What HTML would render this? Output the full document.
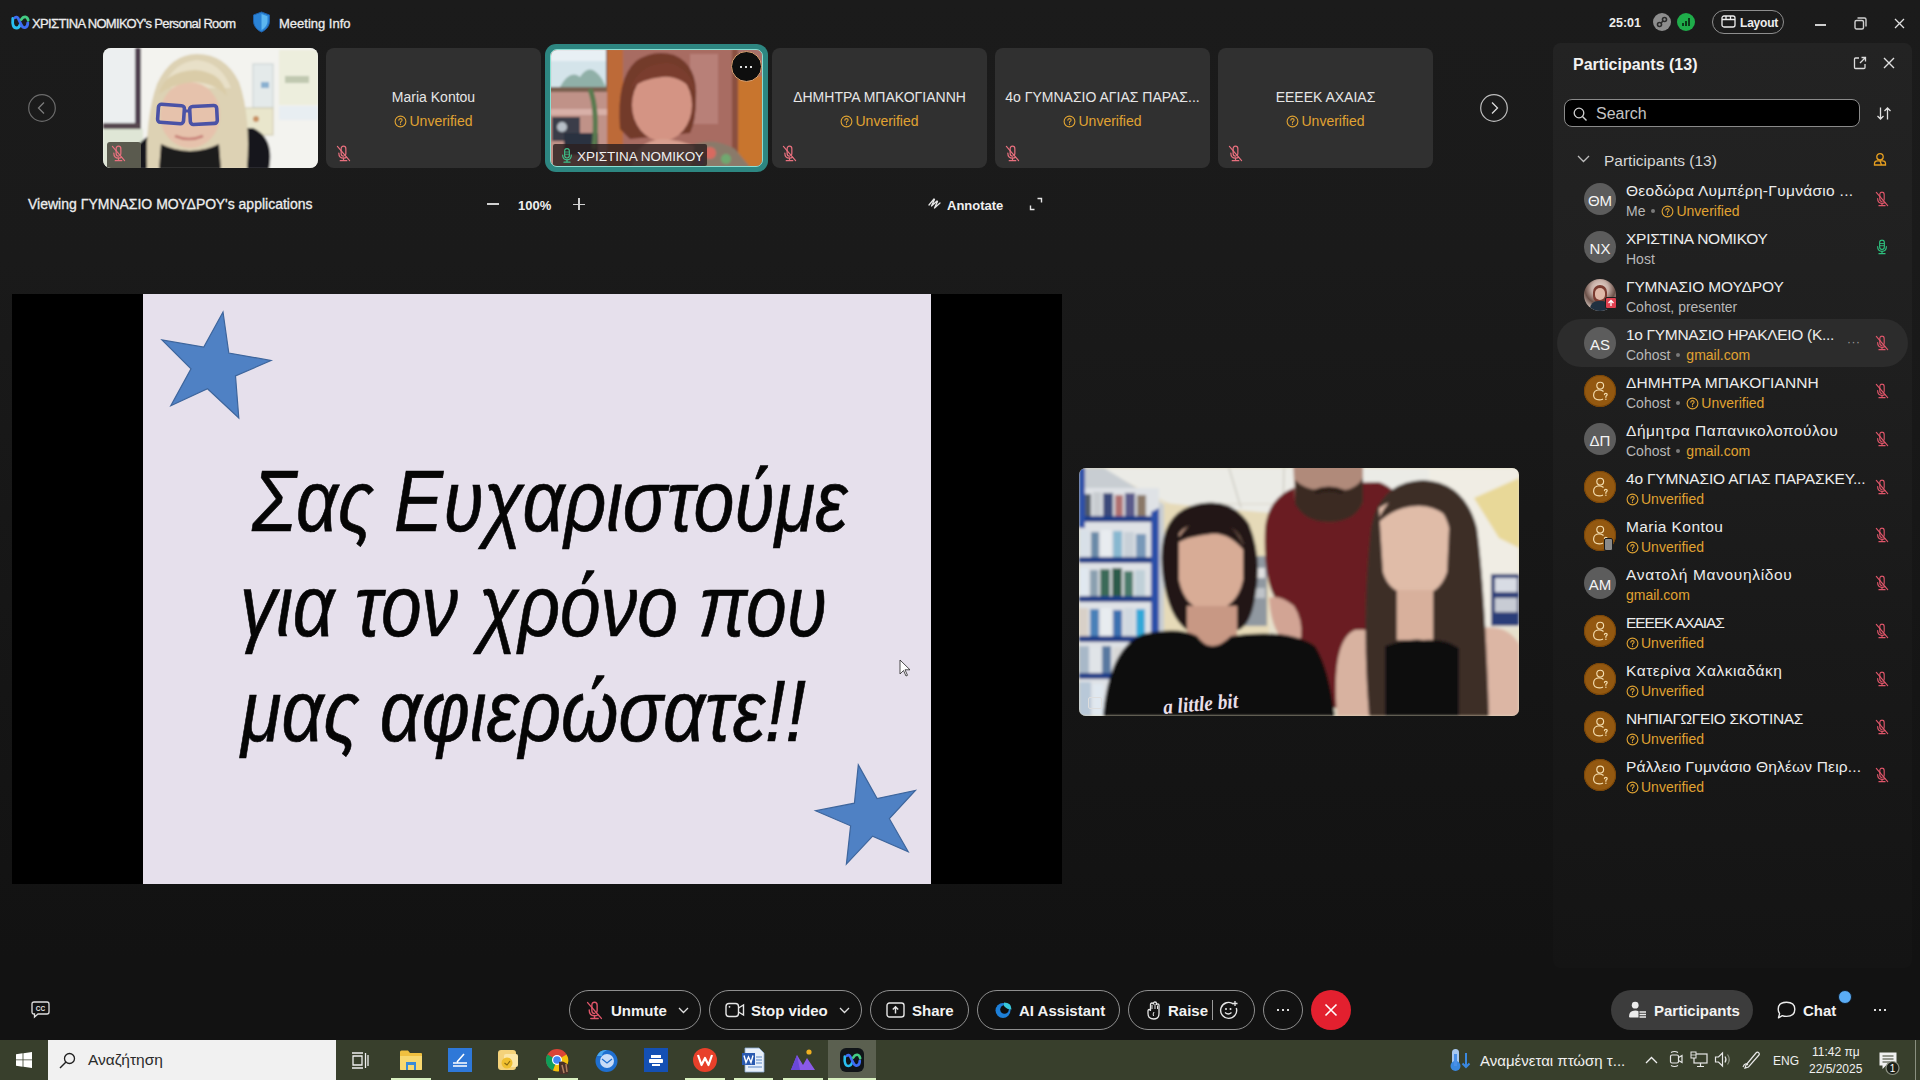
<!DOCTYPE html>
<html><head><meta charset="utf-8">
<style>
*{margin:0;padding:0;box-sizing:border-box}
html,body{width:1920px;height:1080px;overflow:hidden;font-family:"Liberation Sans",sans-serif;color:#e8e8e8}
body{position:relative;background:linear-gradient(#1b1b1b 0px,#1a1a1a 260px,#161616 600px,#121212 960px)}
.a{position:absolute}
.t{position:absolute;white-space:nowrap;line-height:1}
svg{position:absolute;overflow:visible}
#panel{left:1553px;top:43px;width:359px;height:925px;background:linear-gradient(#232323 0px,#1f1f1f 300px,#191919 600px,#141414 925px);border-radius:8px}
.thumb{position:absolute;top:48px;width:215px;height:120px;border-radius:8px;background:#303030;overflow:hidden}
.nm{position:absolute;left:0;width:215px;top:42px;text-align:center;font-size:14px;color:#e6e6e6;line-height:1}
.uv{position:absolute;left:0;width:215px;top:66px;text-align:center;font-size:14px;color:#e0a332;line-height:1}
#share{left:12px;top:294px;width:1050px;height:590px;background:#000}
#slide{left:143px;top:294px;width:788px;height:590px;background:#e6e0ec;overflow:hidden}
#task{left:0;top:1040px;width:1920px;height:40px;background:#383f2c}
.pill{position:absolute;top:990px;height:40px;border:1.5px solid #8e8e8e;border-radius:20px}
.bt{position:absolute;top:1003px;font-size:16px;color:#f2f2f2;line-height:1;white-space:nowrap}
</style></head><body>
<svg width="0" height="0" style="position:absolute">
<defs>
<symbol id="micoff" viewBox="0 0 16 18"><g fill="none" stroke="currentColor" stroke-width="1.3" stroke-linecap="round"><path d="M5.5 6 V4 Q5.5 1.2 8 1.2 Q10.5 1.2 10.5 4 V9 Q10.5 10.5 9.5 11.2"/><path d="M5.5 6 V9 Q5.5 11.8 8 11.8"/><path d="M3 8.5 Q3 14 8 14 Q10 14 11.3 13"/><path d="M8 14 V16.6 M4.5 16.6 H11.5"/><path d="M1.5 1.5 L14.5 16.5"/></g></symbol>
<symbol id="micon" viewBox="0 0 16 18"><g fill="none" stroke="currentColor" stroke-width="1.3" stroke-linecap="round"><rect x="5.3" y="1.2" width="5.4" height="10.6" rx="2.7"/><path d="M3 8.5 Q3 14 8 14 Q13 14 13 8.5"/><path d="M8 14 V16.6 M4.5 16.6 H11.5"/><path d="M6 5 H10 M6 7.5 H10" stroke-width="1"/></g></symbol>
<symbol id="q" viewBox="0 0 14 14"><circle cx="7" cy="7" r="5.8" fill="none" stroke="currentColor" stroke-width="1.2"/><path d="M5.2 5.6 Q5.2 3.9 7 3.9 Q8.8 3.9 8.8 5.5 Q8.8 6.5 7.6 7 Q7 7.3 7 8.2" fill="none" stroke="currentColor" stroke-width="1.1" stroke-linecap="round"/><circle cx="7" cy="10" r="0.75" fill="currentColor"/></symbol>
<symbol id="guest" viewBox="0 0 20 20"><g fill="none" stroke="#f5deb0" stroke-width="1.15" stroke-linecap="round"><circle cx="10.2" cy="4.6" r="3.4"/><path d="M13.2 10.2 Q11.6 8.8 9.3 8.8 Q3.6 9 3.6 14.3 Q3.6 18.8 9.3 18.8 Q11.3 18.8 12.6 18.2"/><path d="M14.4 13.6 Q14.4 12.3 15.8 12.3 Q17.2 12.3 17.2 13.6 Q17.2 14.6 15.9 15.2 V16.3"/></g><circle cx="15.9" cy="18.2" r="0.7" fill="#f5deb0"/></symbol>
</defs></svg>

<!-- ===== TITLE BAR ===== -->
<div id="titlebar">
  <svg style="left:10px;top:13px" width="20" height="20" viewBox="2 3 20 20"><g fill="none" stroke-width="2.8" stroke-linecap="round"><path d="M4.8 8.5 Q3.8 18 8.6 18 Q11.2 18 12.4 14" stroke="#28bff0"/><path d="M6.8 7.8 Q8.6 6.2 10.2 8.4 L13.2 14.6 Q14.8 18 17 17.6 Q19.8 17 19.8 12.8" stroke="#3d6cf2"/><path d="M13.2 9.6 Q15 6.6 17.4 6.8 Q19.4 7 20.2 10.2" stroke="#44cc84"/></g></svg>
  <div class="t" style="left:32px;top:17px;font-size:13px;letter-spacing:-0.65px;color:#ececec;-webkit-text-stroke:0.3px #ececec">ΧΡΙΣΤΙΝΑ ΝΟΜΙΚΟΥ's Personal Room</div>
  <svg style="left:252px;top:11px" width="19" height="22" viewBox="0 0 19 22">
    <path d="M9.5 1 L17.5 4 V10 C17.5 15 14 19 9.5 21 C5 19 1.5 15 1.5 10 V4Z" fill="#2a83d6" stroke="#1e5fa8" stroke-width="1"/>
    <path d="M9.5 3 L15.5 5.3 V10 C15.5 14 13 17 9.5 19Z" fill="#5cb6f0"/>
  </svg>
  <div class="t" style="left:279px;top:17px;font-size:13px;color:#ececec;-webkit-text-stroke:0.3px #ececec">Meeting Info</div>

  <div class="t" style="left:1609px;top:17px;font-size:12.5px;font-weight:bold;color:#ededed">25:01</div>
  <div class="a" style="left:1653px;top:13px;width:18px;height:18px;border-radius:9px;background:#8d8d8d"></div>
  <svg style="left:1656px;top:16px" width="12" height="12" viewBox="0 0 12 12"><circle cx="8.5" cy="3.5" r="2" fill="none" stroke="#2a2a2a" stroke-width="1.6"/><circle cx="3.5" cy="8.5" r="2" fill="none" stroke="#2a2a2a" stroke-width="1.6"/><path d="M7 5 L5 7" stroke="#2a2a2a" stroke-width="1.6"/></svg>
  <div class="a" style="left:1677px;top:13px;width:18px;height:18px;border-radius:9px;background:#1fad4a"></div>
  <svg style="left:1681px;top:16px" width="10" height="11" viewBox="0 0 10 11"><rect x="1" y="7" width="2" height="3" fill="#0b3a18"/><rect x="4" y="5" width="2" height="5" fill="#0b3a18"/><rect x="7" y="2" width="2" height="8" fill="#0b3a18"/></svg>
  <div class="a" style="left:1712px;top:10px;width:72px;height:24px;border:1.5px solid #8e8e8e;border-radius:12px"></div>
  <svg style="left:1721px;top:15px" width="15" height="13" viewBox="0 0 15 13"><rect x="1" y="1" width="13" height="11" rx="2" fill="none" stroke="#eee" stroke-width="1.3"/><path d="M1 4.5 H14 M5 1 V4.5 M9.5 1 V4.5" stroke="#eee" stroke-width="1.3"/></svg>
  <div class="t" style="left:1740px;top:17px;font-size:12px;letter-spacing:-0.2px;font-weight:bold;color:#ededed">Layout</div>
  <div class="a" style="left:1815px;top:24px;width:11px;height:2px;background:#cfcfcf"></div>
  <svg style="left:1854px;top:17px" width="13" height="13" viewBox="0 0 13 13"><rect x="1" y="3.5" width="8.5" height="8.5" rx="1.5" fill="none" stroke="#cfcfcf" stroke-width="1.4"/><path d="M3.5 1 H10.5 Q12 1 12 2.5 V9.5" fill="none" stroke="#cfcfcf" stroke-width="1.4"/></svg>
  <svg style="left:1894px;top:18px" width="11" height="11" viewBox="0 0 11 11"><path d="M1 1 L10 10 M10 1 L1 10" stroke="#e0e0e0" stroke-width="1.3"/></svg>
</div>

<!-- ===== THUMB STRIP ===== -->
<div id="strip">
  <svg style="left:28px;top:94px" width="28" height="28" viewBox="0 0 28 28"><circle cx="14" cy="14" r="13.3" fill="none" stroke="#6b6b6b" stroke-width="1.2"/><path d="M16 8.5 L10.5 14 L16 19.5" fill="none" stroke="#7c7c7c" stroke-width="1.3"/></svg>
  <svg style="left:1480px;top:94px" width="28" height="28" viewBox="0 0 28 28"><circle cx="14" cy="14" r="13.3" fill="none" stroke="#bdbdbd" stroke-width="1.2"/><path d="M12 8.5 L17.5 14 L12 19.5" fill="none" stroke="#dcdcdc" stroke-width="1.3"/></svg>

  <!-- T1 photo -->
  <div class="thumb" style="left:103px;background:#f2f2ee">
    <svg style="left:0;top:0" width="215" height="120" viewBox="0 0 215 120">
      <defs><filter id="bl1" x="-10%" y="-10%" width="120%" height="120%"><feGaussianBlur stdDeviation="1.2"/></filter></defs>
      <g filter="url(#bl1)">
      <rect x="0" y="0" width="215" height="120" fill="#f3f3ef"/>
      <rect x="0" y="0" width="34" height="77" fill="#eceff0"/>
      <rect x="32" y="0" width="6" height="80" fill="#4f3f4f"/>
      <rect x="0" y="75" width="38" height="6" fill="#56464f"/>
      <rect x="0" y="81" width="40" height="40" fill="#dfe6d6"/>
      <rect x="150" y="16" width="20" height="44" fill="#e4eaea" stroke="#c8cfcf" stroke-width="1"/>
      <rect x="158" y="34" width="8" height="6" fill="#8ab0d0"/>
      <rect x="176" y="2" width="39" height="55" fill="#edeedd"/>
      <rect x="182" y="28" width="24" height="7" fill="#c0c8b0"/>
      <rect x="176" y="58" width="39" height="14" fill="#e8eef2"/>
      <rect x="137" y="60" width="33" height="27" fill="#e9e6cc" stroke="#cfc9b0" stroke-width="1"/>
      <circle cx="153" cy="71" r="3" fill="#c89060"/>
      <path d="M24 121 Q28 92 62 80 L150 80 Q172 90 166 121Z" fill="#18181e"/>
      <path d="M44 121 Q42 70 54 36 Q68 6 94 6 Q122 6 136 34 Q148 68 144 121Z" fill="#ddd2b4"/>
      <path d="M60 40 Q70 14 94 12 Q118 14 128 40Z" fill="#e8e0c8"/>
      <ellipse cx="87" cy="67" rx="30" ry="33" fill="#e6c2ac"/>
      <path d="M56 46 Q60 24 92 22 Q120 24 124 48 Q110 34 90 34 Q70 36 56 46Z" fill="#dacca8"/>
      <path d="M58 96 Q87 110 116 96 L118 121 H56Z" fill="#1e1a1e"/>
      <path d="M72 88 Q86 94 100 88" fill="none" stroke="#c88078" stroke-width="2.5"/>
      </g>
      <rect x="55" y="57" width="26" height="18" rx="3" fill="none" stroke="#4a52a6" stroke-width="3.6" transform="rotate(4 68 66)"/>
      <rect x="87" y="58" width="27" height="18" rx="3" fill="none" stroke="#4a52a6" stroke-width="3.6" transform="rotate(-3 100 67)"/>
      <path d="M80 63 H88" stroke="#4a52a6" stroke-width="3"/>
      <rect x="4" y="94" width="34" height="28" rx="3" fill="#5a5a4e"/>
    </svg>
    <svg style="left:8px;top:97px;color:#e8707e" width="15" height="17"><use href="#micoff"/></svg>
  </div>

  <div class="thumb" style="left:326px">
    <div class="nm">Maria Kontou</div>
    <div class="uv"><svg style="position:relative;display:inline-block;vertical-align:-2px;width:13px;height:13px;margin-right:2px;color:#e0a332" viewBox="0 0 14 14"><use href="#q"/></svg>Unverified</div>
    <svg style="left:10px;top:97px;color:#e8707e" width="15" height="17"><use href="#micoff"/></svg>
  </div>

  <!-- T3 active -->
  <div class="a" style="left:545px;top:44px;width:223px;height:128px;border-radius:11px;background:#2d8681"></div>
  <div class="thumb" style="left:550px;top:49px;width:213px;height:118px;border-radius:7px;background:#b27a6c;border:1px solid #8ae0d4">
    <svg style="left:-1px;top:-1px" width="213" height="118" viewBox="0 0 213 118">
      <defs><filter id="bl3" x="-10%" y="-10%" width="120%" height="120%"><feGaussianBlur stdDeviation="1.3"/></filter></defs>
      <g filter="url(#bl3)">
      <rect x="0" y="0" width="213" height="118" fill="#a8706a"/>
      <rect x="0" y="0" width="62" height="40" fill="#d4e4ea"/>
      <path d="M10 38 Q20 20 30 28 Q40 12 52 30 L56 38Z" fill="#90b0a8"/>
      <rect x="0" y="0" width="62" height="12" fill="#e8f0f4"/>
      <rect x="56" y="0" width="8" height="42" fill="#5a4a3a"/>
      <rect x="0" y="38" width="64" height="5" fill="#7a6050"/>
      <rect x="0" y="43" width="70" height="75" fill="#c09288"/>
      <rect x="0" y="60" width="60" height="6" fill="#d8b0a8"/>
      <rect x="2" y="68" width="28" height="24" fill="#3a3e48"/>
      <circle cx="12" cy="78" r="5" fill="#b8c0c8"/>
      <rect x="14" y="84" width="34" height="22" fill="#2a3040"/>
      <path d="M40 40 Q48 60 44 100" stroke="#5a7a50" stroke-width="5" fill="none"/>
      <rect x="57" y="0" width="16" height="118" fill="#bd6a38"/>
      <rect x="73" y="0" width="112" height="118" fill="#a86c62"/>
      <rect x="140" y="5" width="28" height="70" fill="#b88078"/>
      <rect x="184" y="27" width="29" height="91" fill="#c8742e"/>
      <rect x="182" y="0" width="6" height="118" fill="#8a5040"/>
      <path d="M70 80 Q66 30 86 12 Q104 0 124 6 Q148 16 146 50 Q146 72 140 84 L80 90Z" fill="#733a2c"/>
      <ellipse cx="112" cy="56" rx="30" ry="36" fill="#d49484"/>
      <path d="M80 40 Q90 14 118 14 Q140 18 146 44 Q130 26 112 28 Q92 30 80 40Z" fill="#7a3e2e"/>
      <path d="M82 118 Q86 92 112 90 Q130 90 150 100 L160 118Z" fill="#d8a090"/>
      <path d="M145 95 Q165 88 185 100 L200 118 H140Z" fill="#8a7a6a"/>
      <circle cx="160" cy="104" r="6" fill="#d86a60"/>
      <circle cx="176" cy="110" r="5" fill="#70a870"/>
      <circle cx="150" cy="112" r="4" fill="#8060a0"/>
      </g>
      <rect x="3" y="95" width="154" height="22" rx="2" fill="rgba(44,32,32,0.82)"/>
    </svg>
    <svg style="left:9px;top:97px;color:#3fc08a" width="14" height="17"><use href="#micon"/></svg>
    <div class="t" style="left:26px;top:100px;font-size:13.5px;color:#f0f0f0">ΧΡΙΣΤΙΝΑ ΝΟΜΙΚΟΥ</div>
    <div class="a" style="left:180px;top:1px;width:31px;height:31px;border-radius:16px;background:#0e0e0e;border:1px solid #d9a070"></div>
    <div class="a" style="left:189px;top:16px;width:2px;height:2px;background:#ddd"></div>
    <div class="a" style="left:194px;top:16px;width:2px;height:2px;background:#ddd"></div>
    <div class="a" style="left:199px;top:16px;width:2px;height:2px;background:#ddd"></div>
  </div>

  <div class="thumb" style="left:772px">
    <div class="nm">ΔΗΜΗΤΡΑ ΜΠΑΚΟΓΙΑΝΝΗ</div>
    <div class="uv"><svg style="position:relative;display:inline-block;vertical-align:-2px;width:13px;height:13px;margin-right:2px;color:#e0a332" viewBox="0 0 14 14"><use href="#q"/></svg>Unverified</div>
    <svg style="left:10px;top:97px;color:#e8707e" width="15" height="17"><use href="#micoff"/></svg>
  </div>
  <div class="thumb" style="left:995px">
    <div class="nm">4ο ΓΥΜΝΑΣΙΟ ΑΓΙΑΣ ΠΑΡΑΣ...</div>
    <div class="uv"><svg style="position:relative;display:inline-block;vertical-align:-2px;width:13px;height:13px;margin-right:2px;color:#e0a332" viewBox="0 0 14 14"><use href="#q"/></svg>Unverified</div>
    <svg style="left:10px;top:97px;color:#e8707e" width="15" height="17"><use href="#micoff"/></svg>
  </div>
  <div class="thumb" style="left:1218px">
    <div class="nm">ΕΕΕΕΚ ΑΧΑΙΑΣ</div>
    <div class="uv"><svg style="position:relative;display:inline-block;vertical-align:-2px;width:13px;height:13px;margin-right:2px;color:#e0a332" viewBox="0 0 14 14"><use href="#q"/></svg>Unverified</div>
    <svg style="left:10px;top:97px;color:#e8707e" width="15" height="17"><use href="#micoff"/></svg>
  </div>
</div>

<!-- ===== VIEW BAR ===== -->
<div id="viewbar">
  <div class="t" style="left:28px;top:197px;font-size:14px;color:#ededed;-webkit-text-stroke:0.3px #ededed">Viewing ΓΥΜΝΑΣΙΟ ΜΟΥΔΡΟΥ's applications</div>
  <div class="a" style="left:487px;top:203px;width:12px;height:1.6px;background:#d0d0d0"></div>
  <div class="t" style="left:518px;top:199px;font-size:13px;font-weight:bold;color:#f0f0f0">100%</div>
  <div class="a" style="left:573px;top:203.5px;width:12px;height:1.6px;background:#d0d0d0"></div>
  <div class="a" style="left:578.2px;top:198px;width:1.6px;height:12px;background:#d0d0d0"></div>
  <svg style="left:928px;top:197px" width="14" height="13" viewBox="0 0 14 13"><path d="M1 8 L6 2 L6.5 2.5 L3.5 9 L9 4 L9.5 4.5 L6.5 11 L12 6" fill="none" stroke="#e6e6e6" stroke-width="1.3" stroke-linejoin="round" stroke-linecap="round"/></svg>
  <div class="t" style="left:947px;top:199px;font-size:13px;font-weight:bold;color:#f0f0f0">Annotate</div>
  <svg style="left:1029px;top:197px" width="14" height="14" viewBox="0 0 14 14"><path d="M8.5 1.5 H12.5 V5.5 M5.5 12.5 H1.5 V8.5" fill="none" stroke="#e6e6e6" stroke-width="1.4"/></svg>
</div>

<!-- ===== SHARE ===== -->
<div id="share" class="a"></div>
<div id="slide" class="a">
  <svg style="left:0;top:0" width="788" height="590" viewBox="143 294 788 590">
    <polygon points="223,312 228.8,353 271,360.5 235.5,376 238.8,418 207.5,388.8 170.8,405.8 191,368.8 162,340 203.8,347" fill="#4f81c4" stroke="#3d659c" stroke-width="1.2" stroke-linejoin="miter"/>
    <polygon points="858.3,764.9 877.1,798.6 915.4,790.4 889.4,818.7 908.2,851.8 872.6,836.2 846.4,864.1 850.6,825.8 815.6,810.7 854.4,803.2" fill="#4f81c4" stroke="#3d659c" stroke-width="1.2"/>
    <path d="M900 660 V674 L903.5 670.5 L906 676 L907.5 675.3 L905 669.8 H910Z" fill="#fff" stroke="#222" stroke-width="0.8"/>
  </svg>
  <div class="t" style="left:109px;top:163px;font-size:88px;font-style:italic;color:#050505;-webkit-text-stroke:0.7px #050505;transform:scaleX(0.835);transform-origin:0 0">Σας Ευχαριστούμε</div>
  <div class="t" style="left:97px;top:268px;font-size:88px;font-style:italic;color:#050505;-webkit-text-stroke:0.7px #050505;transform:scaleX(0.83);transform-origin:0 0">για τον χρόνο που</div>
  <div class="t" style="left:98px;top:373px;font-size:88px;font-style:italic;color:#050505;-webkit-text-stroke:0.7px #050505;transform:scaleX(0.838);transform-origin:0 0">μας αφιερώσατε!!</div>
</div>

<!-- ===== VIDEO ===== -->
<div id="video" class="a" style="left:1079px;top:468px;width:440px;height:248px;border-radius:7px;overflow:hidden;background:#e4dcc0">
  <svg style="left:0;top:0" width="440" height="248" viewBox="0 0 440 248">
    <defs><filter id="blv" x="-5%" y="-5%" width="110%" height="110%"><feGaussianBlur stdDeviation="1.4"/></filter></defs>
    <g filter="url(#blv)">
    <rect x="0" y="0" width="440" height="248" fill="#e6e0cc"/>
    <!-- ceiling -->
    <path d="M20 0 H440 V30 Q400 40 330 45 H200 L100 40Z" fill="#ebebe6"/>
    <path d="M150 0 L162 40 M205 0 L204 42" stroke="#c8c6bc" stroke-width="1.2"/>
    <path d="M115 36 H440" stroke="#d8d4c8" stroke-width="1"/>
    <!-- left wall -->
    <path d="M0 0 H25 L90 40 V248 H0Z" fill="#c8cdd2"/>
    <path d="M85 35 L190 45 V200 H85Z" fill="#e6dab8"/>
    <!-- bookshelf left -->
    <rect x="0" y="20" width="80" height="228" fill="#dfe2e6"/>
    <g>
      <rect x="2" y="26" width="10" height="22" fill="#505a68"/><rect x="14" y="24" width="8" height="24" fill="#c8ccd0"/><rect x="24" y="25" width="10" height="23" fill="#3a4a7a"/><rect x="36" y="27" width="8" height="21" fill="#b07070"/><rect x="46" y="25" width="10" height="23" fill="#5a5a8a"/><rect x="58" y="27" width="9" height="21" fill="#8a7868"/>
      <rect x="0" y="62" width="10" height="27" fill="#d8e0e8"/><rect x="12" y="64" width="8" height="25" fill="#6a8aa8"/><rect x="22" y="62" width="10" height="27" fill="#e8ecf0"/><rect x="34" y="63" width="9" height="26" fill="#88b8d0"/><rect x="45" y="64" width="10" height="25" fill="#c8d0d8"/><rect x="57" y="66" width="10" height="23" fill="#7898b8"/>
      <rect x="0" y="100" width="9" height="28" fill="#e0e8f0"/><rect x="11" y="102" width="8" height="26" fill="#8aa0b0"/><rect x="21" y="101" width="10" height="27" fill="#3a6a58"/><rect x="33" y="100" width="10" height="28" fill="#2a5a48"/><rect x="45" y="103" width="9" height="25" fill="#4a7a6a"/><rect x="56" y="102" width="10" height="26" fill="#c0d0d8"/>
      <rect x="0" y="140" width="9" height="28" fill="#d8d0c8"/><rect x="11" y="141" width="9" height="27" fill="#4a80b8"/><rect x="22" y="140" width="10" height="28" fill="#e8ecf0"/><rect x="34" y="142" width="9" height="26" fill="#3a70b0"/><rect x="45" y="140" width="10" height="28" fill="#d0d8e0"/><rect x="57" y="141" width="9" height="27" fill="#30a8d8"/>
      <rect x="0" y="178" width="10" height="27" fill="#a8b8c8"/><rect x="12" y="180" width="9" height="25" fill="#e0e4e8"/><rect x="23" y="178" width="9" height="27" fill="#5878a0"/><rect x="34" y="179" width="10" height="26" fill="#d8d8d8"/><rect x="46" y="180" width="8" height="25" fill="#b0a8a0"/>
      <rect x="0" y="214" width="12" height="34" fill="#b8c8d8"/><rect x="14" y="216" width="10" height="32" fill="#e0e8f0"/>
    </g>
    <rect x="0" y="48" width="78" height="6" fill="#1e3c88"/>
    <rect x="0" y="89" width="78" height="6" fill="#1e3c88"/>
    <rect x="0" y="128" width="78" height="6" fill="#1e3c88"/>
    <rect x="0" y="168" width="72" height="6" fill="#1e3c88"/>
    <rect x="0" y="205" width="62" height="6" fill="#1e3c88"/>
    <path d="M72 44 L80 40 V200 L72 204Z" fill="#2a50a8"/>
    <rect x="0" y="0" width="6" height="60" fill="#2a50a8"/>
    <!-- back shelf center -->
    <rect x="160" y="88" width="28" height="70" fill="#9098a0"/>
    <rect x="162" y="100" width="24" height="10" fill="#e0e0e0"/>
    <rect x="162" y="120" width="24" height="10" fill="#c0c4c8"/>
    <!-- right background -->
    <path d="M350 0 H440 V160 H350Z" fill="#f0ede4"/>
    <path d="M395 30 L440 10 V80 L420 70Z" fill="#e8d898"/>
    <rect x="412" y="106" width="28" height="52" fill="#2c3e78"/>
    <rect x="416" y="110" width="22" height="14" fill="#d8dce4"/>
    <rect x="416" y="130" width="22" height="14" fill="#c8ccd4"/>
    <!-- man -->
    <path d="M186 60 Q190 22 230 16 L300 14 Q330 24 332 80 L320 240 H226 L215 180 Q200 140 196 130 Q184 110 186 60Z" fill="#6a1c24"/>
    <path d="M214 -6 H284 V34 Q274 52 250 54 Q226 52 216 34Z" fill="#b08a7a"/>
    <path d="M216 12 Q224 20 238 22 Q252 18 266 22 Q278 20 284 10 V34 Q276 54 250 54 Q226 54 216 36Z" fill="#3a2a22"/>
    <path d="M236 24 Q250 18 264 24" stroke="#2a1c16" stroke-width="5" fill="none"/>
    <path d="M190 130 Q200 126 215 138 Q224 152 222 170 L204 172 Q192 160 190 130Z" fill="#d2a494"/>
    <!-- girl 2 -->
    <path d="M258 248 Q252 172 276 162 Q300 160 306 172 L308 248Z" fill="#d8b2a0"/>
    <path d="M402 160 Q428 156 440 176 V248 H404Z" fill="#dcb6a4"/>
    <path d="M290 248 Q282 150 292 60 Q300 14 344 12 Q386 14 398 60 Q406 120 410 248Z" fill="#3e2e28"/>
    <path d="M300 40 Q312 30 340 32 Q364 34 370 60 L368 104 Q360 128 336 128 Q310 126 304 104Z" fill="#e0bca8"/>
    <path d="M298 56 Q310 20 344 22 Q372 24 376 56 Q360 38 340 38 Q316 38 298 56Z" fill="#3e2e28"/>
    <rect x="318" y="122" width="36" height="50" fill="#d8b09c"/>
    <path d="M306 248 V178 Q330 170 344 172 Q366 170 380 180 V248Z" fill="#0e0e10"/>
    <!-- girl 1 -->
    <path d="M84 110 Q76 50 112 38 Q150 26 170 56 Q184 90 176 130 Q172 156 160 162 L108 162 Q90 150 84 110Z" fill="#221614"/>
    <path d="M100 66 Q108 54 132 54 Q158 56 164 76 L164 112 Q158 140 132 144 Q106 142 100 112Z" fill="#d8ac96"/>
    <path d="M96 76 Q110 48 134 52 Q160 56 166 84 Q150 64 132 66 Q110 68 96 76Z" fill="#221614"/>
    <rect x="108" y="138" width="50" height="40" fill="#c89884"/>
    <path d="M24 248 Q30 180 64 166 Q100 158 118 168 Q132 188 152 168 Q210 160 236 178 Q250 200 256 248Z" fill="#0b0b0d"/>
    </g>
  </svg>
  <div class="t" style="left:85px;top:229px;font-size:21px;font-weight:bold;font-style:italic;color:#e8dee8;font-family:'Liberation Serif',serif;transform:rotate(-5deg) scaleX(0.92);transform-origin:0 100%">a little bit</div>
  <div class="a" style="left:9px;top:229px;width:14px;height:12px;border:1.2px solid #ddd;border-radius:2px"></div>
</div>

<!-- ===== PANEL ===== -->
<div id="panel" class="a"></div>
<div id="plist">
  <div class="t" style="left:1573px;top:57px;font-size:16px;font-weight:bold;color:#f2f2f2">Participants (13)</div>
  <svg style="left:1853px;top:56px" width="14" height="14" viewBox="0 0 14 14"><path d="M6 2 H2.5 Q1.5 2 1.5 3 V11.5 Q1.5 12.5 2.5 12.5 H11 Q12 12.5 12 11.5 V8" fill="none" stroke="#dcdcdc" stroke-width="1.3"/><path d="M8.5 1.5 H12.5 V5.5 M12.5 1.5 L7 7" fill="none" stroke="#dcdcdc" stroke-width="1.3"/></svg>
  <svg style="left:1883px;top:57px" width="12" height="12" viewBox="0 0 12 12"><path d="M1 1 L11 11 M11 1 L1 11" stroke="#e0e0e0" stroke-width="1.4"/></svg>
  <div class="a" style="left:1564px;top:99px;width:296px;height:28px;background:#000;border:1.5px solid #8a8a8a;border-radius:8px"></div>
  <svg style="left:1573px;top:107px" width="15" height="15" viewBox="0 0 15 15"><circle cx="6" cy="6" r="4.8" fill="none" stroke="#d0d0d0" stroke-width="1.3"/><path d="M9.5 9.5 L13.5 13.5" stroke="#d0d0d0" stroke-width="1.4"/></svg>
  <div class="t" style="left:1596px;top:106px;font-size:16px;color:#c4c4c4">Search</div>
  <svg style="left:1876px;top:106px" width="16" height="15" viewBox="0 0 16 15"><path d="M4.5 1.5 V13 M1.5 10 L4.5 13 L7.5 10 M11.5 13.5 V2 M8.5 5 L11.5 2 L14.5 5" fill="none" stroke="#e0e0e0" stroke-width="1.3"/></svg>
  <svg style="left:1577px;top:155px" width="13" height="8" viewBox="0 0 13 8"><path d="M1 1 L6.5 6.5 L12 1" fill="none" stroke="#bdbdbd" stroke-width="1.3"/></svg>
  <div class="t" style="left:1604px;top:153px;font-size:15.5px;color:#d6d6d6">Participants (13)</div>
  <svg style="left:1873px;top:152px" width="14" height="14" viewBox="0 0 14 14"><g fill="none" stroke="#e8a020" stroke-width="1.3"><circle cx="7" cy="4.8" r="3.2"/><path d="M1.5 13 V11.5 Q1.5 8.8 4.5 8.8 H9.5 Q12.5 8.8 12.5 11.5 V13 Z"/><path d="M7 8.8 L8.5 13"/></g></svg>
  <div class="a" style="left:1557px;top:319px;width:351px;height:48px;border-radius:24px;background:#2c2c2c"></div>
  <div class="t" style="left:1847px;top:336px;font-size:12px;color:#9a9a9a;letter-spacing:0.5px">···</div>
  <div class="a" style="left:1584px;top:183px;width:32px;height:32px;border-radius:16px;background:#5c5c5c"></div>
  <div class="t" style="left:1584px;top:193px;width:32px;text-align:center;font-size:15px;color:#f4f4f4">ΘΜ</div>
  <div class="t" style="left:1626px;top:183px;font-size:15.5px;letter-spacing:0.3px;color:#ececec">Θεοδώρα Λυμπέρη-Γυμνάσιο ...</div>
  <div class="t" style="left:1626px;top:204px;font-size:14px"><span style="color:#b8b8b8">Me</span><span style="display:inline-block;width:4px;height:4px;border-radius:2px;background:#7a7a7a;margin:0 6px;vertical-align:3px"></span><svg style="position:relative;display:inline-block;vertical-align:-2px;width:13px;height:13px;margin-right:2px;color:#e0a332" viewBox="0 0 14 14"><use href="#q"/></svg><span style="color:#e0a332">Unverified</span></div>
  <svg style="left:1875px;top:191px;color:#e0566a" width="14" height="16" viewBox="0 0 16 18"><use href="#micoff"/></svg>
  <div class="a" style="left:1584px;top:231px;width:32px;height:32px;border-radius:16px;background:#5c5c5c"></div>
  <div class="t" style="left:1584px;top:241px;width:32px;text-align:center;font-size:15px;color:#f4f4f4">ΝΧ</div>
  <div class="t" style="left:1626px;top:231px;font-size:15.5px;letter-spacing:-0.24px;color:#ececec">ΧΡΙΣΤΙΝΑ ΝΟΜΙΚΟΥ</div>
  <div class="t" style="left:1626px;top:252px;font-size:14px"><span style="color:#b8b8b8">Host</span></div>
  <svg style="left:1875px;top:239px;color:#2ec07e" width="14" height="16" viewBox="0 0 16 18"><use href="#micon"/></svg>
  <div class="a" style="left:1584px;top:279px;width:32px;height:32px;border-radius:16px;overflow:hidden;background:radial-gradient(circle at 50% 30%,#e8d8d0 0,#c8b0a8 30%,#6a5048 55%,#d8c8c0 80%)"><div class="a" style="left:9px;top:6px;width:14px;height:18px;border-radius:7px;background:#7a3a30"></div><div class="a" style="left:11px;top:9px;width:10px;height:12px;border-radius:5px;background:#e0b8a8"></div><div class="a" style="left:6px;top:22px;width:20px;height:12px;border-radius:8px 8px 0 0;background:#203040"></div></div>
  <div class="a" style="left:1605px;top:297px;width:12px;height:12px;border-radius:2px;background:#e04050;border:1px solid #1e1e1e"></div>
  <svg style="left:1607px;top:299px" width="8" height="8" viewBox="0 0 8 8"><path d="M4 7 V1.5 M1.5 4 L4 1.5 L6.5 4" fill="none" stroke="#fff" stroke-width="1.3"/></svg>
  <div class="t" style="left:1626px;top:279px;font-size:15.5px;letter-spacing:-0.14px;color:#ececec">ΓΥΜΝΑΣΙΟ ΜΟΥΔΡΟΥ</div>
  <div class="t" style="left:1626px;top:300px;font-size:14px"><span style="color:#b8b8b8">Cohost, presenter</span></div>
  <div class="a" style="left:1584px;top:327px;width:32px;height:32px;border-radius:16px;background:#5c5c5c"></div>
  <div class="t" style="left:1584px;top:337px;width:32px;text-align:center;font-size:15px;color:#f4f4f4">AS</div>
  <div class="t" style="left:1626px;top:327px;font-size:15.5px;letter-spacing:-0.31px;color:#ececec">1ο ΓΥΜΝΑΣΙΟ ΗΡΑΚΛΕΙΟ (Κ...</div>
  <div class="t" style="left:1626px;top:348px;font-size:14px"><span style="color:#b8b8b8">Cohost</span><span style="display:inline-block;width:4px;height:4px;border-radius:2px;background:#7a7a7a;margin:0 6px;vertical-align:3px"></span><span style="color:#e0a332">gmail.com</span></div>
  <svg style="left:1875px;top:335px;color:#e0566a" width="14" height="16" viewBox="0 0 16 18"><use href="#micoff"/></svg>
  <div class="a" style="left:1584px;top:375px;width:32px;height:32px;border-radius:16px;background:#935810;box-shadow:inset 0 0 0 1px #7a4608"></div>
  <svg style="left:1590px;top:381px" width="20" height="20" viewBox="0 0 20 20"><use href="#guest"/></svg>
  <div class="t" style="left:1626px;top:375px;font-size:15.5px;letter-spacing:0.08px;color:#ececec">ΔΗΜΗΤΡΑ ΜΠΑΚΟΓΙΑΝΝΗ</div>
  <div class="t" style="left:1626px;top:396px;font-size:14px"><span style="color:#b8b8b8">Cohost</span><span style="display:inline-block;width:4px;height:4px;border-radius:2px;background:#7a7a7a;margin:0 6px;vertical-align:3px"></span><svg style="position:relative;display:inline-block;vertical-align:-2px;width:13px;height:13px;margin-right:2px;color:#e0a332" viewBox="0 0 14 14"><use href="#q"/></svg><span style="color:#e0a332">Unverified</span></div>
  <svg style="left:1875px;top:383px;color:#e0566a" width="14" height="16" viewBox="0 0 16 18"><use href="#micoff"/></svg>
  <div class="a" style="left:1584px;top:423px;width:32px;height:32px;border-radius:16px;background:#5c5c5c"></div>
  <div class="t" style="left:1584px;top:433px;width:32px;text-align:center;font-size:15px;color:#f4f4f4">ΔΠ</div>
  <div class="t" style="left:1626px;top:423px;font-size:15.5px;letter-spacing:0.53px;color:#ececec">Δήμητρα Παπανικολοπούλου</div>
  <div class="t" style="left:1626px;top:444px;font-size:14px"><span style="color:#b8b8b8">Cohost</span><span style="display:inline-block;width:4px;height:4px;border-radius:2px;background:#7a7a7a;margin:0 6px;vertical-align:3px"></span><span style="color:#e0a332">gmail.com</span></div>
  <svg style="left:1875px;top:431px;color:#e0566a" width="14" height="16" viewBox="0 0 16 18"><use href="#micoff"/></svg>
  <div class="a" style="left:1584px;top:471px;width:32px;height:32px;border-radius:16px;background:#935810;box-shadow:inset 0 0 0 1px #7a4608"></div>
  <svg style="left:1590px;top:477px" width="20" height="20" viewBox="0 0 20 20"><use href="#guest"/></svg>
  <div class="t" style="left:1626px;top:471px;font-size:15.5px;letter-spacing:-0.17px;color:#ececec">4ο ΓΥΜΝΑΣΙΟ ΑΓΙΑΣ ΠΑΡΑΣΚΕΥ...</div>
  <div class="t" style="left:1626px;top:492px;font-size:14px"><svg style="position:relative;display:inline-block;vertical-align:-2px;width:13px;height:13px;margin-right:2px;color:#e0a332" viewBox="0 0 14 14"><use href="#q"/></svg><span style="color:#e0a332">Unverified</span></div>
  <svg style="left:1875px;top:479px;color:#e0566a" width="14" height="16" viewBox="0 0 16 18"><use href="#micoff"/></svg>
  <div class="a" style="left:1584px;top:519px;width:32px;height:32px;border-radius:16px;background:#935810;box-shadow:inset 0 0 0 1px #7a4608"></div>
  <svg style="left:1590px;top:525px" width="20" height="20" viewBox="0 0 20 20"><use href="#guest"/></svg>
  <div class="a" style="left:1604px;top:538px;width:9px;height:13px;border-radius:2px;background:#8a8a8a;border:1px solid #1a1a1a"></div>
  <div class="t" style="left:1626px;top:519px;font-size:15.5px;letter-spacing:0.42px;color:#ececec">Maria Kontou</div>
  <div class="t" style="left:1626px;top:540px;font-size:14px"><svg style="position:relative;display:inline-block;vertical-align:-2px;width:13px;height:13px;margin-right:2px;color:#e0a332" viewBox="0 0 14 14"><use href="#q"/></svg><span style="color:#e0a332">Unverified</span></div>
  <svg style="left:1875px;top:527px;color:#e0566a" width="14" height="16" viewBox="0 0 16 18"><use href="#micoff"/></svg>
  <div class="a" style="left:1584px;top:567px;width:32px;height:32px;border-radius:16px;background:#5c5c5c"></div>
  <div class="t" style="left:1584px;top:577px;width:32px;text-align:center;font-size:15px;color:#f4f4f4">ΑΜ</div>
  <div class="t" style="left:1626px;top:567px;font-size:15.5px;letter-spacing:0.66px;color:#ececec">Ανατολή Μανουηλίδου</div>
  <div class="t" style="left:1626px;top:588px;font-size:14px"><span style="color:#e0a332">gmail.com</span></div>
  <svg style="left:1875px;top:575px;color:#e0566a" width="14" height="16" viewBox="0 0 16 18"><use href="#micoff"/></svg>
  <div class="a" style="left:1584px;top:615px;width:32px;height:32px;border-radius:16px;background:#935810;box-shadow:inset 0 0 0 1px #7a4608"></div>
  <svg style="left:1590px;top:621px" width="20" height="20" viewBox="0 0 20 20"><use href="#guest"/></svg>
  <div class="t" style="left:1626px;top:615px;font-size:15.5px;letter-spacing:-1.04px;color:#ececec">ΕΕΕΕΚ ΑΧΑΙΑΣ</div>
  <div class="t" style="left:1626px;top:636px;font-size:14px"><svg style="position:relative;display:inline-block;vertical-align:-2px;width:13px;height:13px;margin-right:2px;color:#e0a332" viewBox="0 0 14 14"><use href="#q"/></svg><span style="color:#e0a332">Unverified</span></div>
  <svg style="left:1875px;top:623px;color:#e0566a" width="14" height="16" viewBox="0 0 16 18"><use href="#micoff"/></svg>
  <div class="a" style="left:1584px;top:663px;width:32px;height:32px;border-radius:16px;background:#935810;box-shadow:inset 0 0 0 1px #7a4608"></div>
  <svg style="left:1590px;top:669px" width="20" height="20" viewBox="0 0 20 20"><use href="#guest"/></svg>
  <div class="t" style="left:1626px;top:663px;font-size:15.5px;letter-spacing:0.52px;color:#ececec">Κατερίνα Χαλκιαδάκη</div>
  <div class="t" style="left:1626px;top:684px;font-size:14px"><svg style="position:relative;display:inline-block;vertical-align:-2px;width:13px;height:13px;margin-right:2px;color:#e0a332" viewBox="0 0 14 14"><use href="#q"/></svg><span style="color:#e0a332">Unverified</span></div>
  <svg style="left:1875px;top:671px;color:#e0566a" width="14" height="16" viewBox="0 0 16 18"><use href="#micoff"/></svg>
  <div class="a" style="left:1584px;top:711px;width:32px;height:32px;border-radius:16px;background:#935810;box-shadow:inset 0 0 0 1px #7a4608"></div>
  <svg style="left:1590px;top:717px" width="20" height="20" viewBox="0 0 20 20"><use href="#guest"/></svg>
  <div class="t" style="left:1626px;top:711px;font-size:15.5px;letter-spacing:-0.37px;color:#ececec">ΝΗΠΙΑΓΩΓΕΙΟ ΣΚΟΤΙΝΑΣ</div>
  <div class="t" style="left:1626px;top:732px;font-size:14px"><svg style="position:relative;display:inline-block;vertical-align:-2px;width:13px;height:13px;margin-right:2px;color:#e0a332" viewBox="0 0 14 14"><use href="#q"/></svg><span style="color:#e0a332">Unverified</span></div>
  <svg style="left:1875px;top:719px;color:#e0566a" width="14" height="16" viewBox="0 0 16 18"><use href="#micoff"/></svg>
  <div class="a" style="left:1584px;top:759px;width:32px;height:32px;border-radius:16px;background:#935810;box-shadow:inset 0 0 0 1px #7a4608"></div>
  <svg style="left:1590px;top:765px" width="20" height="20" viewBox="0 0 20 20"><use href="#guest"/></svg>
  <div class="t" style="left:1626px;top:759px;font-size:15.5px;letter-spacing:0.19px;color:#ececec">Ράλλειο Γυμνάσιο Θηλέων Πειρ...</div>
  <div class="t" style="left:1626px;top:780px;font-size:14px"><svg style="position:relative;display:inline-block;vertical-align:-2px;width:13px;height:13px;margin-right:2px;color:#e0a332" viewBox="0 0 14 14"><use href="#q"/></svg><span style="color:#e0a332">Unverified</span></div>
  <svg style="left:1875px;top:767px;color:#e0566a" width="14" height="16" viewBox="0 0 16 18"><use href="#micoff"/></svg>
</div>

<!-- ===== BOTTOM ===== -->
<div id="controls">
  <svg style="left:31px;top:1001px" width="19" height="17" viewBox="0 0 19 17"><path d="M3 1 H16 Q18 1 18 3 V11 Q18 13 16 13 H7 L3.5 16 V13 H3 Q1 13 1 11 V3 Q1 1 3 1Z" fill="none" stroke="#e0e0e0" stroke-width="1.3"/><text x="9.5" y="9.6" font-size="6.5" font-weight="bold" text-anchor="middle" fill="#e0e0e0" font-family="Liberation Sans">CC</text></svg>

  <div class="pill" style="left:569px;width:132px"></div>
  <svg style="left:586px;top:1001px;color:#e0566a" width="17" height="19" viewBox="0 0 16 18"><use href="#micoff"/></svg>
  <div class="bt" style="left:611px;font-weight:bold;font-size:15px">Unmute</div>
  <svg style="left:678px;top:1007px" width="11" height="7" viewBox="0 0 11 7"><path d="M1 1 L5.5 5.5 L10 1" fill="none" stroke="#e0e0e0" stroke-width="1.3"/></svg>

  <div class="pill" style="left:709px;width:153px"></div>
  <svg style="left:725px;top:1002px" width="20" height="16" viewBox="0 0 20 16"><rect x="1" y="1.5" width="12.5" height="13" rx="3" fill="none" stroke="#e6e6e6" stroke-width="1.4"/><path d="M13.5 6 L18.5 3 V13 L13.5 10" fill="none" stroke="#e6e6e6" stroke-width="1.4"/><circle cx="4.5" cy="4.8" r="0.9" fill="#e6e6e6"/></svg>
  <div class="bt" style="left:751px;font-weight:bold;font-size:15px">Stop video</div>
  <svg style="left:839px;top:1007px" width="11" height="7" viewBox="0 0 11 7"><path d="M1 1 L5.5 5.5 L10 1" fill="none" stroke="#e0e0e0" stroke-width="1.3"/></svg>

  <div class="pill" style="left:870px;width:99px"></div>
  <svg style="left:886px;top:1002px" width="19" height="16" viewBox="0 0 19 16"><rect x="1" y="1" width="17" height="14" rx="2.5" fill="none" stroke="#e6e6e6" stroke-width="1.4"/><path d="M9.5 11.5 V5 M6.8 7.5 L9.5 4.8 L12.2 7.5" fill="none" stroke="#e6e6e6" stroke-width="1.4"/></svg>
  <div class="bt" style="left:912px;font-weight:bold;font-size:15px">Share</div>

  <div class="pill" style="left:977px;width:143px"></div>
  <svg style="left:994px;top:1001px" width="19" height="18" viewBox="0 0 19 18"><circle cx="9" cy="9.5" r="7.5" fill="#1d7fd8"/><circle cx="10.5" cy="8.5" r="4.3" fill="#0d0d0d"/><path d="M10 1.5 Q17.5 1.5 17.5 8.5 Q13 8.5 10 5Z" fill="#39c7d8"/></svg>
  <div class="bt" style="left:1019px;font-weight:bold;font-size:15px">AI Assistant</div>

  <div class="pill" style="left:1128px;width:127px"></div>
  <svg style="left:1147px;top:1001px" width="13" height="19" viewBox="0 0 13 19"><path d="M3.5 9 V3.5 Q3.5 2 5 2 Q6.5 2 6.5 3.5 V2.5 Q6.5 1 8 1 Q9.5 1 9.5 2.5 V4 Q9.5 2.8 10.8 2.8 Q12 2.8 12 4 V12.5 Q12 18 6.8 18 Q1 18 1 12.5 V10 Q1 8.5 2.2 8.5 Q3.5 8.5 3.5 10" fill="none" stroke="#e6e6e6" stroke-width="1.3"/><path d="M5 4 V8 M8 3 V8 M10.5 4.5 V8 M7 11 Q5.5 13 6.5 15" fill="none" stroke="#e6e6e6" stroke-width="1"/></svg>
  <div class="bt" style="left:1168px;font-weight:bold;font-size:15px">Raise</div>
  <div class="a" style="left:1212px;top:1000px;width:1px;height:20px;background:#9a9a9a"></div>
  <svg style="left:1219px;top:1000px" width="20" height="20" viewBox="0 0 20 20"><path d="M14.5 4 A8 8 0 1 0 17.3 8" fill="none" stroke="#e6e6e6" stroke-width="1.4"/><circle cx="7" cy="9" r="1" fill="#e6e6e6"/><circle cx="11.5" cy="9" r="1" fill="#e6e6e6"/><path d="M6 12.5 Q9.3 15.5 12.5 12.5" fill="none" stroke="#e6e6e6" stroke-width="1.3"/><path d="M16 1 V6 M13.5 3.5 H18.5" stroke="#e6e6e6" stroke-width="1.3"/></svg>

  <div class="a" style="left:1263px;top:990px;width:40px;height:40px;border:1.5px solid #8e8e8e;border-radius:20px"></div>
  <div class="a" style="left:1277px;top:1009px;width:2px;height:2px;background:#ddd"></div>
  <div class="a" style="left:1282px;top:1009px;width:2px;height:2px;background:#ddd"></div>
  <div class="a" style="left:1287px;top:1009px;width:2px;height:2px;background:#ddd"></div>

  <div class="a" style="left:1311px;top:990px;width:40px;height:40px;border-radius:20px;background:#e3202f"></div>
  <svg style="left:1324px;top:1003px" width="14" height="14" viewBox="0 0 14 14"><path d="M1.5 1.5 L12.5 12.5 M12.5 1.5 L1.5 12.5" stroke="#fff" stroke-width="1.6"/></svg>

  <div class="a" style="left:1611px;top:990px;width:142px;height:40px;border-radius:20px;background:#3c3c3c"></div>
  <svg style="left:1628px;top:1001px" width="19" height="18" viewBox="0 0 19 18"><circle cx="7.2" cy="4.2" r="3.4" fill="#ececec"/><path d="M1 15.5 Q1 9.5 7.2 9.5 Q9.5 9.5 10.5 10.3 V16.5 H2 Q1 16.5 1 15.5Z" fill="#ececec"/><path d="M11.5 11 H18 M11.5 13.5 H18 M11.5 16 H18" stroke="#ececec" stroke-width="1.3"/></svg>
  <div class="bt" style="left:1654px;font-weight:bold;font-size:15px">Participants</div>

  <svg style="left:1777px;top:1001px" width="19" height="18" viewBox="0 0 19 18"><path d="M9.5 1.2 Q17.8 1.2 17.8 8.3 Q17.8 15.4 9.5 15.4 Q7 15.4 5.3 14.6 L1.5 16.8 L2.6 12.6 Q1.2 10.8 1.2 8.3 Q1.2 1.2 9.5 1.2Z" fill="none" stroke="#ececec" stroke-width="1.4" stroke-linejoin="round"/></svg>
  <div class="bt" style="left:1803px;font-weight:bold;font-size:15px">Chat</div>
  <div class="a" style="left:1838px;top:990px;width:14px;height:14px;border-radius:7px;background:#5aacf5;border:1.5px solid #0e1c2a"></div>
  <div class="a" style="left:1874px;top:1009px;width:2px;height:2px;background:#ddd"></div>
  <div class="a" style="left:1879px;top:1009px;width:2px;height:2px;background:#ddd"></div>
  <div class="a" style="left:1884px;top:1009px;width:2px;height:2px;background:#ddd"></div>
</div>

<!-- ===== TASKBAR ===== -->
<div id="task" class="a"></div>
<div id="taskitems">
  <svg style="left:16px;top:1052px" width="16" height="16" viewBox="0 0 16 16"><path d="M0 2.2 L6.6 1.3 V7.5 H0Z M7.4 1.2 L16 0 V7.5 H7.4Z M0 8.3 H6.6 V14.7 L0 13.8Z M7.4 8.3 H16 V16 L7.4 14.8Z" fill="#fff"/></svg>
  <div class="a" style="left:48px;top:1040px;width:288px;height:40px;background:#f1f1f1"></div>
  <svg style="left:59px;top:1052px" width="17" height="17" viewBox="0 0 17 17"><circle cx="10.5" cy="6.5" r="5" fill="none" stroke="#202020" stroke-width="1.3"/><path d="M7 10 L1 16" stroke="#202020" stroke-width="1.4"/></svg>
  <div class="t" style="left:88px;top:1052px;font-size:15.5px;color:#2a2a2a">Αναζήτηση</div>
  <svg style="left:351px;top:1052px" width="18" height="17" viewBox="0 0 18 17"><path d="M1 1 H12 M1 16 H12 M2 4 H11 V13 H2Z M14.5 1 V16 M17 3 V14" fill="none" stroke="#f0f0f0" stroke-width="1.3"/></svg>

  <!-- folder -->
  <svg style="left:399px;top:1049px" width="24" height="22" viewBox="0 0 24 22"><path d="M1 3 Q1 1.5 2.5 1.5 H9 L11 4 H22 Q23 4 23 5 V20 Q23 21 22 21 H2 Q1 21 1 20Z" fill="#f0c040"/><path d="M1 7 H23 V20 Q23 21 22 21 H2 Q1 21 1 20Z" fill="#f8d870"/><rect x="7" y="13" width="10" height="8" fill="#3a8ad8"/><rect x="9" y="16" width="6" height="5" fill="#f8d870"/></svg>
  <div class="a" style="left:391px;top:1078px;width:40px;height:2px;background:#d8f0c0"></div>
  <!-- scanner -->
  <div class="a" style="left:448px;top:1048px;width:24px;height:24px;background:#2e78d8"></div>
  <svg style="left:450px;top:1050px" width="20" height="20" viewBox="0 0 20 20"><path d="M3 13 H17 M3 16 H17 M7 12 L14 4" fill="none" stroke="#fff" stroke-width="1.6"/></svg>
  <!-- outlook -->
  <svg style="left:496px;top:1048px" width="24" height="24" viewBox="0 0 24 24"><rect x="2" y="2" width="18" height="20" rx="3" fill="#f4d27a"/><rect x="8" y="6" width="14" height="13" rx="2" fill="#fbe6a8"/><circle cx="11" cy="15" r="5.5" fill="#f0c030"/><path d="M8.5 15 L11 17 L14 13" fill="none" stroke="#8a6a10" stroke-width="1.2"/></svg>
  <!-- chrome -->
  <svg style="left:545px;top:1048px" width="26" height="26" viewBox="0 0 26 26"><circle cx="12" cy="12" r="11" fill="#db4437"/><path d="M12 12 L2.5 6.5 A11 11 0 0 0 8 22.5Z" fill="#0f9d58"/><path d="M12 12 L21.5 6.5 A11 11 0 0 1 8 22.5Z" fill="#f4c20d"/><circle cx="12" cy="12" r="5" fill="#fff"/><circle cx="12" cy="12" r="3.8" fill="#4285f4"/><path d="M14 14 Q19 12 24 18 L23 26 H14Z" fill="#4a3028"/><path d="M17 17 L19 25 M21 16 L22 24" stroke="#b08060" stroke-width="1.5"/></svg>
  <div class="a" style="left:538px;top:1078px;width:40px;height:2px;background:#d8f0c0"></div>
  <!-- thunderbird -->
  <svg style="left:594px;top:1048px" width="25" height="25" viewBox="0 0 25 25"><circle cx="12.5" cy="13" r="11" fill="#1f6fd0"/><path d="M3 8 Q6 1 13 2 Q8 4 8 8Z" fill="#4aa8f0"/><circle cx="13" cy="13" r="7" fill="#c8dcf8"/><path d="M8 11 L13 15 L18 11" fill="none" stroke="#1f6fd0" stroke-width="1.2"/></svg>
  <!-- printer -->
  <div class="a" style="left:644px;top:1048px;width:24px;height:24px;background:#1450b4"></div>
  <svg style="left:648px;top:1052px" width="16" height="16" viewBox="0 0 16 16"><rect x="3" y="3" width="10" height="3" fill="#fff"/><rect x="1" y="7" width="14" height="4" rx="1" fill="#fff"/><rect x="4" y="12" width="8" height="2" fill="#fff"/></svg>
  <!-- WPS -->
  <div class="a" style="left:693px;top:1048px;width:24px;height:24px;border-radius:12px;background:#e8402a"></div>
  <svg style="left:697px;top:1053px" width="16" height="14" viewBox="0 0 16 14"><path d="M1 2 L4.5 12 L8 5 L11.5 12 L15 2" fill="none" stroke="#fff" stroke-width="2.2" stroke-linejoin="round"/></svg>
  <div class="a" style="left:685px;top:1078px;width:40px;height:2px;background:#d8f0c0"></div>
  <!-- word -->
  <svg style="left:741px;top:1047px" width="25" height="26" viewBox="0 0 25 26"><path d="M4 1 H18 L23 6 V25 H4Z" fill="#e8f0fa" stroke="#8aa8d0" stroke-width="0.8"/><rect x="1" y="6" width="13" height="12" fill="#2a5ab0"/><path d="M3 8.5 L5 15.5 L7.5 10 L10 15.5 L12 8.5" fill="none" stroke="#fff" stroke-width="1.4"/><path d="M15 10 H21 M15 13 H21 M15 16 H21 M7 20 H21" stroke="#5a88c8" stroke-width="1"/></svg>
  <div class="a" style="left:734px;top:1078px;width:39px;height:2px;background:#d8f0c0"></div>
  <!-- purple -->
  <svg style="left:790px;top:1048px" width="26" height="24" viewBox="0 0 26 24"><path d="M1 22 L7 7 L13 17 L17 10 L25 22Z" fill="#8a5ae8"/><path d="M7 7 L10 22 H1Z" fill="#6a48d8"/><circle cx="19" cy="4" r="2.6" fill="#f0b020"/></svg>
  <div class="a" style="left:783px;top:1078px;width:40px;height:2px;background:#d8f0c0"></div>
  <!-- webex active -->
  <div class="a" style="left:828px;top:1040px;width:48px;height:40px;background:#5b6050"></div>
  <div class="a" style="left:840px;top:1048px;width:24px;height:24px;border-radius:6px;background:#101418"></div>
  <svg style="left:840px;top:1048px" width="24" height="24" viewBox="0 0 24 24"><g fill="none" stroke-width="2.6" stroke-linecap="round"><path d="M4.8 8.5 Q3.8 18 8.6 18 Q11.2 18 12.4 14" stroke="#28bff0"/><path d="M6.8 7.8 Q8.6 6.2 10.2 8.4 L13.2 14.6 Q14.8 18 17 17.6 Q19.8 17 19.8 12.8" stroke="#3d6cf2"/><path d="M13.2 9.6 Q15 6.6 17.4 6.8 Q19.4 7 20.2 10.2" stroke="#44cc84"/></g></svg>
  <div class="a" style="left:828px;top:1078px;width:48px;height:2px;background:#d8f0c0"></div>

  <!-- tray -->
  <svg style="left:1449px;top:1048px" width="24" height="24" viewBox="0 0 24 24"><rect x="3" y="1" width="7" height="16" rx="3.5" fill="#a8c8f0"/><circle cx="6.5" cy="18" r="5" fill="#3a88e0"/><rect x="5" y="6" width="3" height="12" fill="#4a90e8"/><path d="M17 5 V19 M13.5 15.5 L17 19 L20.5 15.5" fill="none" stroke="#3a88e0" stroke-width="2"/></svg>
  <div class="t" style="left:1480px;top:1053px;font-size:15px;color:#f0f0f0">Αναμένεται πτώση τ...</div>
  <svg style="left:1645px;top:1056px" width="13" height="8" viewBox="0 0 13 8"><path d="M1 7 L6.5 1.5 L12 7" fill="none" stroke="#f0f0f0" stroke-width="1.3"/></svg>
  <svg style="left:1669px;top:1050px" width="15" height="19" viewBox="0 0 15 19"><rect x="1.5" y="5" width="8" height="8" rx="1.5" fill="none" stroke="#e8e8e8" stroke-width="1.2"/><path d="M9.5 7.5 L13 5.5 V12.5 L9.5 10.5" fill="none" stroke="#e8e8e8" stroke-width="1.2"/><path d="M2 2.5 Q5.5 0.5 9 2.5 M2 15.5 Q5.5 17.5 9 15.5" fill="none" stroke="#e8e8e8" stroke-width="1.1"/></svg>
  <svg style="left:1690px;top:1051px" width="18" height="17" viewBox="0 0 18 17"><rect x="4" y="3" width="13" height="9" fill="none" stroke="#e8e8e8" stroke-width="1.2"/><path d="M10.5 12 V15 M7 15.5 H14" stroke="#e8e8e8" stroke-width="1.2"/><rect x="1" y="1" width="5" height="6" fill="#383f2c" stroke="#e8e8e8" stroke-width="1"/><path d="M1 4 H6" stroke="#e8e8e8" stroke-width="0.8"/></svg>
  <svg style="left:1714px;top:1051px" width="19" height="17" viewBox="0 0 19 17"><path d="M1.5 6 H4.5 L8.5 2 V15 L4.5 11 H1.5Z" fill="none" stroke="#e8e8e8" stroke-width="1.2"/><path d="M11 5.5 Q13 8.5 11 11.5" fill="none" stroke="#e8e8e8" stroke-width="1.2"/><path d="M13.5 3.5 Q17 8.5 13.5 13.5" fill="none" stroke="#8a8f80" stroke-width="1.2"/></svg>
  <svg style="left:1742px;top:1050px" width="19" height="19" viewBox="0 0 19 19"><path d="M4 15 L14 3 Q15.5 1.5 16.8 2.8 Q18 4 16.5 5.5 L6.5 17 L3 18Z" fill="none" stroke="#e8e8e8" stroke-width="1.2"/><path d="M1 17 Q3 12 6 15" fill="none" stroke="#e8e8e8" stroke-width="1.1"/></svg>
  <div class="t" style="left:1773px;top:1055px;font-size:12px;color:#f0f0f0">ENG</div>
  <div class="t" style="left:1812px;top:1046px;font-size:12px;color:#f0f0f0">11:42 πμ</div>
  <div class="t" style="left:1809px;top:1063px;font-size:12px;color:#f0f0f0">22/5/2025</div>
  <svg style="left:1878px;top:1051px" width="26" height="26" viewBox="0 0 26 26"><path d="M1.5 1.5 H18.5 V14.5 H8 L4.5 18 V14.5 H1.5Z" fill="#f0f0f0"/><path d="M4.5 5 H15.5 M4.5 8 H15.5 M4.5 11 H12" stroke="#383f2c" stroke-width="1.2"/><circle cx="14.5" cy="17" r="6.5" fill="#1c2018" stroke="#8a8f80" stroke-width="1.2"/><text x="14.5" y="21" font-size="10" fill="#fff" text-anchor="middle" font-family="Liberation Sans">1</text></svg>
  <div class="a" style="left:1915px;top:1040px;width:1px;height:40px;background:#8a9080"></div>
</div>

</body></html>
